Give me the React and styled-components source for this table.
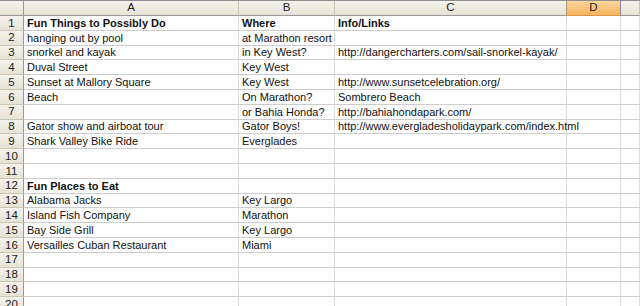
import React from "react";
import styled, { createGlobalStyle } from "styled-components";

const Global = createGlobalStyle`
  html, body { margin: 0; padding: 0; background: #fff; overflow: hidden; }
  body { font-family: "Liberation Sans", Arial, sans-serif; }
`;

const Sheet = styled.div`
  display: grid;
  grid-template-columns: 24px 215px 96px 232px 54px 1fr;
  grid-template-rows: 15px repeat(20, 14.8px);
  width: 640px;
  height: 306px;
  overflow: hidden;
  font-family: "Liberation Sans", Arial, sans-serif;
  font-size: 11px;
  color: #111;
  border-top: 1px solid #8d8d8d;
  box-sizing: border-box;
`;

const HeaderBase = styled.div`
  box-sizing: border-box;
  background: linear-gradient(#f4f3ec, #e6e3d6);
  border-right: 1px solid #c9c6b6;
  border-bottom: 1px solid #c9c6b6;
  display: flex;
  align-items: center;
  justify-content: center;
  color: #222;
  font-size: 11.5px;
  line-height: 1;
`;

const Corner = styled(HeaderBase)`
  border-bottom: 1px solid #9a9a9a;
  border-right: 1px solid #9a9a9a;
`;

const ColHeader = styled(HeaderBase)`
  border-bottom: 1px solid #9a9a9a;
  ${(p) =>
    p.$selected &&
    `
    background: linear-gradient(#fbd59c, #f6b45e);
    border-right: 1px solid #8c86a6;
    margin-left: -1px;
    border-left: 1px solid #b39a76;
    border-bottom: 1px solid #d9954a;
  `}
`;

const RowHeader = styled(HeaderBase)`
  border-right: 1px solid #9a9a9a;
  padding-top: 1px;
`;

const Cell = styled.div`
  box-sizing: border-box;
  border-right: 1px solid #dcdcdc;
  border-bottom: 1px solid #cdcdcd;
  padding: 0 2px 0 3px;
  display: flex;
  align-items: center;
  white-space: nowrap;
  overflow: visible;
  font-weight: ${(p) => (p.$bold ? 700 : 400)};
  position: relative;
  z-index: ${(p) => (p.$text ? 1 : 0)};
  background: transparent;
`;

const columns = ["A", "B", "C", "D", ""];

const data = [
  [{ t: "Fun Things to Possibly Do", b: true }, { t: "Where", b: true }, { t: "Info/Links", b: true }],
  ["hanging out by pool", "at Marathon resort", ""],
  ["snorkel and kayak", "in Key West?", "http://dangercharters.com/sail-snorkel-kayak/"],
  ["Duval Street", "Key West", ""],
  ["Sunset at Mallory Square", "Key West", "http://www.sunsetcelebration.org/"],
  ["Beach", "On Marathon?", "Sombrero Beach"],
  ["", "or Bahia Honda?", "http://bahiahondapark.com/"],
  ["Gator show and airboat tour", "Gator Boys!", "http://www.evergladesholidaypark.com/index.html"],
  ["Shark Valley Bike Ride", "Everglades", ""],
  ["", "", ""],
  ["", "", ""],
  [{ t: "Fun Places to Eat", b: true }, "", ""],
  ["Alabama Jacks", "Key Largo", ""],
  ["Island Fish Company", "Marathon", ""],
  ["Bay Side Grill", "Key Largo", ""],
  ["Versailles Cuban Restaurant", "Miami", ""],
  ["", "", ""],
  ["", "", ""],
  ["", "", ""],
  ["", "", ""],
];

export default function App() {
  return (
    <>
      <Global />
      <Sheet>
        <Corner />
        {columns.map((c, i) => (
          <ColHeader key={i} $selected={c === "D"}>
            {c}
          </ColHeader>
        ))}
        {data.map((row, r) => (
          <React.Fragment key={r}>
            <RowHeader>{r + 1}</RowHeader>
            {[0, 1, 2, 3, 4].map((ci) => {
              const v = row[ci];
              const text = typeof v === "object" && v ? v.t : v || "";
              const bold = typeof v === "object" && v ? v.b : false;
              return (
                <Cell key={ci} $bold={bold} $text={!!text}>
                  {text}
                </Cell>
              );
            })}
          </React.Fragment>
        ))}
      </Sheet>
    </>
  );
}
